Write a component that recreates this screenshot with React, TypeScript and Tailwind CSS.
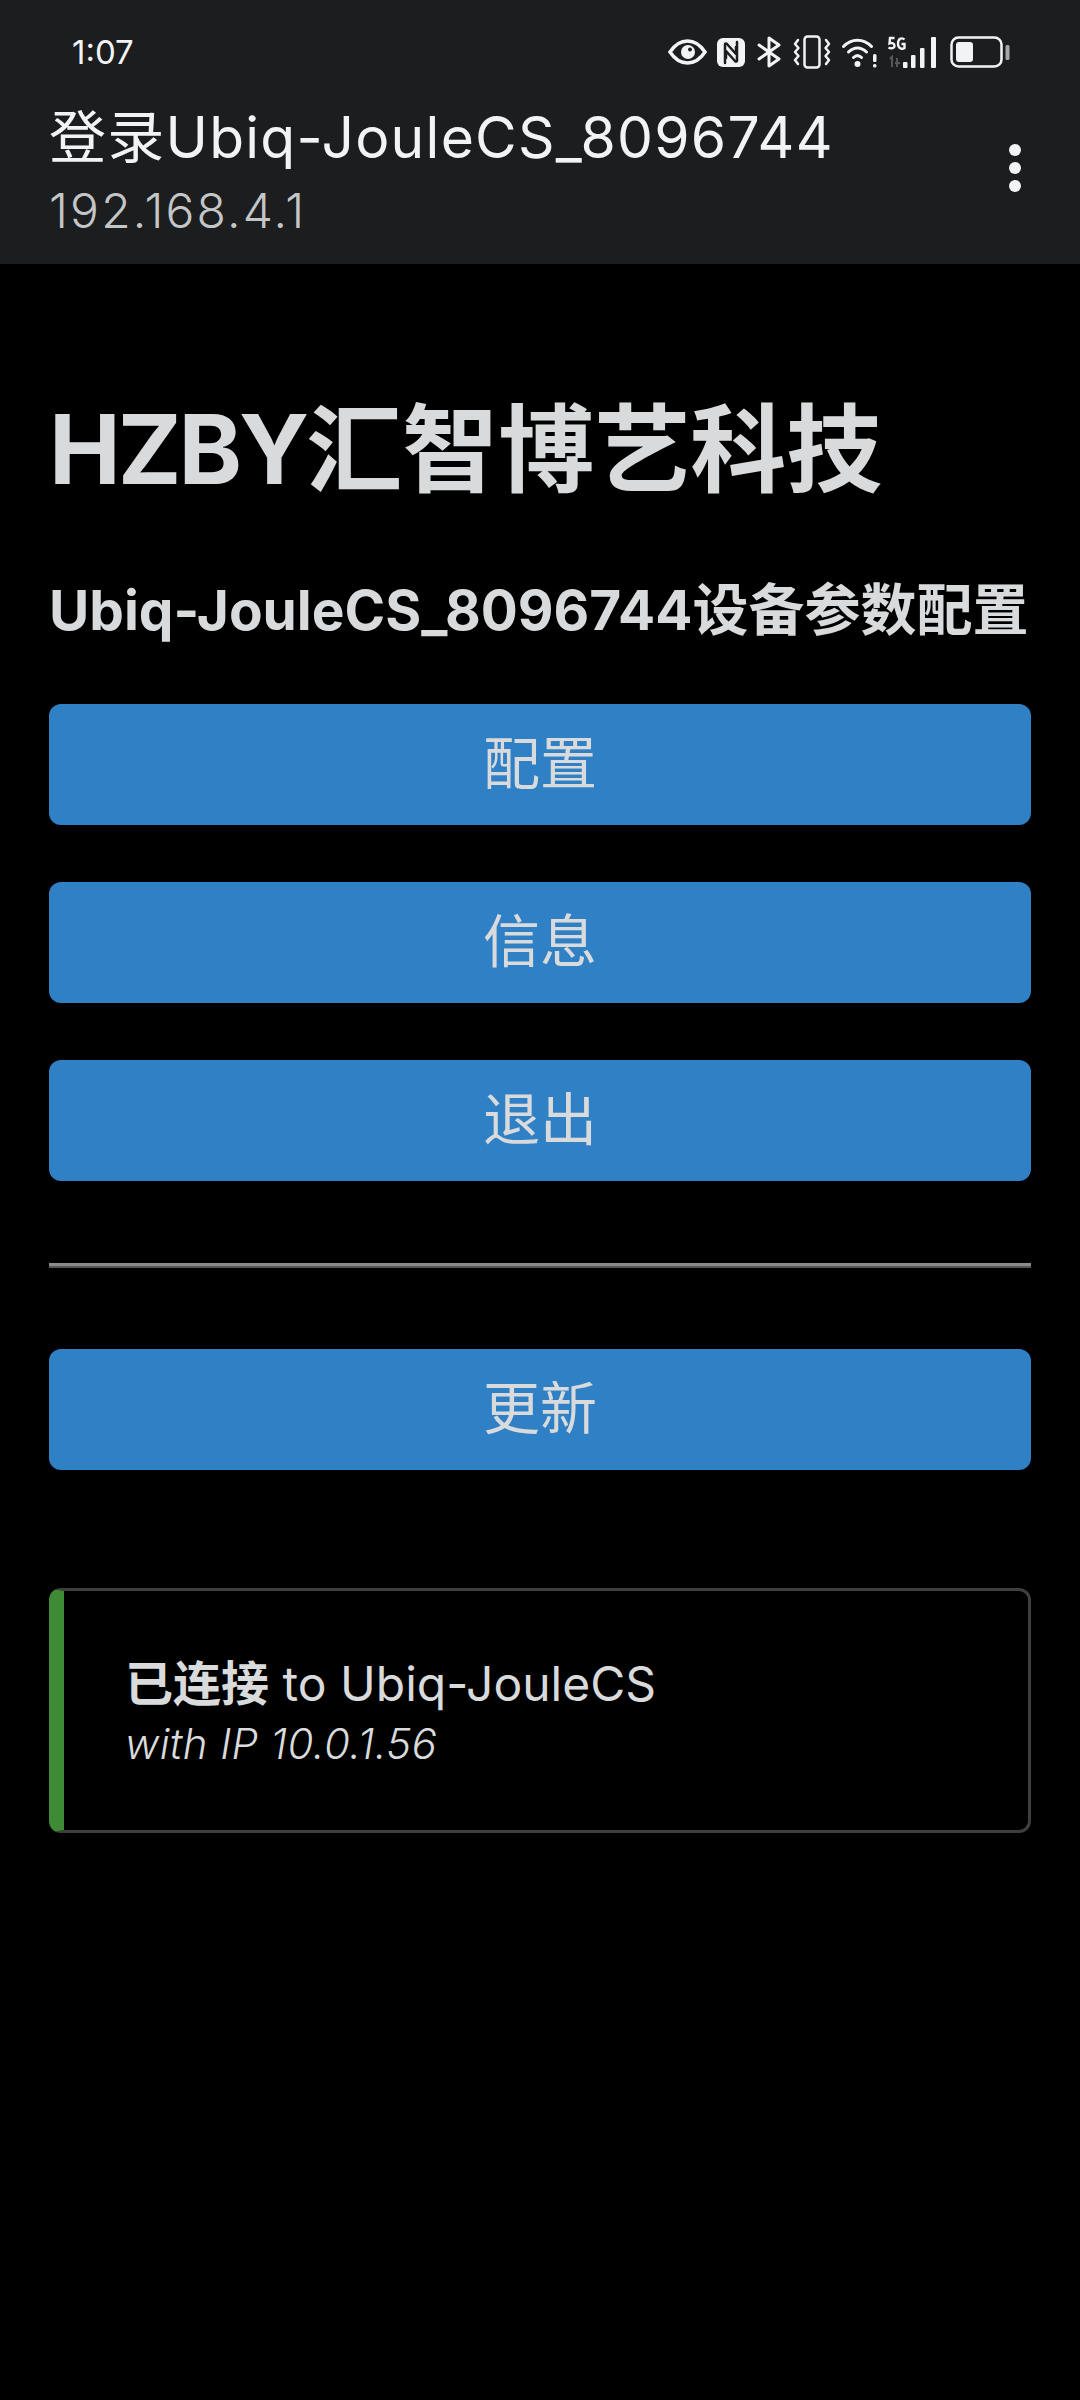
const cjk = '[font-family:Inter,"Noto_Sans_CJK_SC",sans-serif]';

function StatusIcons() {
  return (
    <div className="flex items-center">
      {/* eye */}
      <svg width="39" height="26" viewBox="0 0 39 26" fill="none" className="mr-[10px]">
        <path d="M2 13C7 5.500 13 2 19.500 2S32 5.500 37 13c-5 7.500-11 11-17.500 11S7 20.500 2 13Z" stroke="#f2f3f5" strokeWidth="3.500" />
        <circle cx="20" cy="13" r="7" fill="#f2f3f5" />
        <circle cx="22" cy="10.500" r="2" fill="#1c1d1f" />
      </svg>
      {/* nfc */}
      <svg width="28" height="29" viewBox="0 0 28 29" fill="none" className="mr-[12px]">
        <path d="M6 0h16a6 6 0 0 1 6 6v17a6 6 0 0 1-6 6H6a6 6 0 0 1-6-6V6a6 6 0 0 1 6-6Z" fill="#f2f3f5" />
        <path d="M8 25V6.500c0-1 1-1.500 2-.5l9 10V9M20 4v18.500c0 1-1 1.500-2 .5l-9-10v7" stroke="#1c1d1f" strokeWidth="2.500" strokeLinecap="round" strokeLinejoin="round" />
      </svg>
      {/* bluetooth */}
      <svg width="24" height="32" viewBox="0 0 24 32" fill="none" className="mr-[12px]">
        <path d="M2 9l20 14-10 7V2l10 7L2 23" stroke="#f2f3f5" strokeWidth="3" strokeLinejoin="round" strokeLinecap="round" />
      </svg>
      {/* vibrate */}
      <svg width="38" height="34" viewBox="0 0 38 34" fill="none" className="mr-[11px]">
        <rect x="11.500" y="1.500" width="15" height="31" rx="3" stroke="#f2f3f5" strokeWidth="2.500" />
        <path d="M5 5 2 9l3.500 4-3.500 4 3.500 4L2 25l3 4M33 5l3 4-3.500 4 3.500 4-3.500 4 3.500 4-3 4" stroke="#f2f3f5" strokeWidth="2.500" strokeLinecap="round" strokeLinejoin="round" />
      </svg>
      {/* wifi with alert */}
      <svg width="35" height="31" viewBox="0 0 35 31" fill="none" className="mr-[10px]">
        <path d="M1.500 9.500c8-8.500 20-8.500 28 0" stroke="#f2f3f5" strokeWidth="3" strokeLinecap="round" />
        <path d="M6.500 15c5.500-5.500 12.500-5.500 18 0" stroke="#f2f3f5" strokeWidth="3" strokeLinecap="round" />
        <path d="M11.500 20.500c2.500-2.500 5.500-2.500 8 0" stroke="#f2f3f5" strokeWidth="3" strokeLinecap="round" />
        <circle cx="15.500" cy="27" r="3" fill="#f2f3f5" />
        <rect x="31" y="17" width="3.500" height="8" rx="1.500" fill="#f2f3f5" />
        <rect x="31" y="27" width="3.500" height="3.500" rx="1.500" fill="#f2f3f5" />
      </svg>
      {/* 5G + signal */}
      <svg width="50" height="32" viewBox="0 0 50 32" fill="none" className="mr-[13px]">
        <path d="M7.500 2H3L2.500 7.500c2.500-1 5-.3 5 2.200S4 13 1.500 11.500" stroke="#f2f3f5" strokeWidth="2.400" />
        <path d="M17.500 3.500C15.500 1.500 11 2 11 7.500s4.500 6 6.500 4.500V8h-3" stroke="#f2f3f5" strokeWidth="2.400" />
        <path d="M3 23l2-2v10M10 31v-9M8 27h5" stroke="#56575a" strokeWidth="2" />
        <rect x="16" y="26" width="4.500" height="6" rx="1" fill="#f2f3f5" />
        <rect x="24" y="19" width="4.500" height="13" rx="1" fill="#f2f3f5" />
        <rect x="33" y="12" width="4.500" height="20" rx="1" fill="#f2f3f5" />
        <rect x="44" y="1" width="5" height="31" rx="1" fill="#f2f3f5" />
      </svg>
      {/* battery */}
      <svg width="60" height="32" viewBox="0 0 60 32" fill="none">
        <rect x="1.500" y="1.500" width="50" height="29" rx="7" stroke="#f2f3f5" strokeWidth="2.500" />
        <rect x="6" y="6" width="17" height="20" rx="3" fill="#f2f3f5" />
        <rect x="55.500" y="9" width="4" height="15" rx="1.500" fill="#a6a7a9" />
      </svg>
    </div>
  );
}

function MenuButton({ label }: { label: string }) {
  return (
    <button className="block h-[121px] w-full rounded-[12px] bg-[#3080c6] pb-[2px] text-[57px] leading-none text-[#d9dadb]">
      {label}
    </button>
  );
}

export default function App() {
  return (
    <div className={`min-h-[2400px] bg-black ${cjk}`}>
      <header className="h-[264px] bg-[#1c1d1f] text-[#f2f3f5]">
        <div className="flex h-[104px] items-center justify-between pl-[72px] pr-[70px]">
          <span className="text-[33px] leading-none">1:07</span>
          <StatusIcons />
        </div>
        <div className="flex items-start justify-between pl-[49px] pr-[59px]">
          <div>
            <div className="h-[68px] whitespace-nowrap text-[57px] leading-[68px] tracking-[1.250px]">登录Ubiq-JouleCS_8096744</div>
            <div className="mt-[4px] text-[48px] font-light leading-[70px] tracking-[2.200px] text-[#c4c5c7]">192.168.4.1</div>
          </div>
          <div className="mt-[40px] flex flex-col gap-[6px]">
            <span className="size-3 rounded-full bg-[#f2f3f5]" />
            <span className="size-3 rounded-full bg-[#f2f3f5]" />
            <span className="size-3 rounded-full bg-[#f2f3f5]" />
          </div>
        </div>
      </header>
      <main className="px-[49px] text-[#d9dadb]">
        <h1 className="mt-[128px] whitespace-nowrap text-[96px] font-bold leading-[114px]"><span className="tracking-[-3px]">HZBY</span>汇智博艺科技</h1>
        <h3 className="mt-[71px] whitespace-nowrap text-[55px] font-bold leading-[66px]">Ubiq-JouleCS_8096744<span className="text-[56px]">设备参数配置</span></h3>
        <div className="mt-[61px] flex flex-col gap-[57px]">
          <MenuButton label="配置" />
          <MenuButton label="信息" />
          <MenuButton label="退出" />
        </div>
        <hr className="mt-[82px] h-[5px] border-0 border-t-[3px] border-[#8a8a8a] bg-[#555555]" />
        <div className="mt-[81px]">
          <MenuButton label="更新" />
        </div>
        <div className="mt-[118px] flex h-[245px] flex-col justify-center rounded-[12px] border-[3px] border-l-[15px] border-[#3f3f3f] border-l-[#3f8a34] pl-[61px] pt-[7px]">
          <div className="whitespace-nowrap text-[48px] leading-[60px]"><strong className="font-bold">已连接</strong> to Ubiq-JouleCS</div>
          <div className="text-[42px] font-light italic leading-[60px] tracking-[0.400px]">with IP 10.0.1.56</div>
        </div>
      </main>
    </div>
  );
}
